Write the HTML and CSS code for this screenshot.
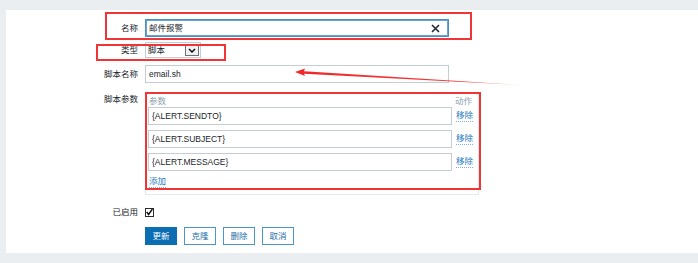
FILE: index.html
```html
<!DOCTYPE html>
<html lang="zh-CN">
<head>
  <meta charset="UTF-8">
  <title>报警媒介类型</title>
  <link rel="stylesheet" href="styles.css">
</head>
<body>

  <div class="page">
    <div class="panel">

      <div class="row row-name">
        <label class="label">名称</label>
        <div class="field">
          <div class="text-box focused wide">
            <span>邮件报警</span>
            <svg class="clear" width="9" height="9" viewBox="0 0 9 9"><path d="M1 1 L8 8 M8 1 L1 8" stroke="#1f2c33" stroke-width="1.6"/></svg>
          </div>
        </div>
      </div>

      <div class="row row-type">
        <label class="label">类型</label>
        <div class="field">
          <div class="select">
            <span>脚本</span>
            <span class="select-btn">
              <svg width="8" height="5" viewBox="0 0 8 5"><path d="M1 1 L4 4 L7 1" fill="none" stroke="#111" stroke-width="1.5"/></svg>
            </span>
          </div>
        </div>
      </div>

      <div class="row row-script">
        <label class="label">脚本名称</label>
        <div class="field">
          <div class="text-box wide">email.sh</div>
        </div>
      </div>

      <div class="row row-params">
        <label class="label label-top">脚本参数</label>
        <div class="field">
          <div class="params">
            <div class="params-head">
              <span>参数</span>
              <span>动作</span>
            </div>
            <div class="param">
              <div class="text-box param-box">{ALERT.SENDTO}</div>
              <a class="link">移除</a>
            </div>
            <div class="param">
              <div class="text-box param-box">{ALERT.SUBJECT}</div>
              <a class="link">移除</a>
            </div>
            <div class="param">
              <div class="text-box param-box">{ALERT.MESSAGE}</div>
              <a class="link">移除</a>
            </div>
            <a class="link add">添加</a>
          </div>
        </div>
      </div>

      <div class="row row-enabled">
        <label class="label">已启用</label>
        <div class="field">
          <span class="checkbox">
            <svg width="8" height="8" viewBox="0 0 8 8"><path d="M0.8 4 L3 6.8 L7.4 0.6" fill="none" stroke="#111" stroke-width="1.7"/></svg>
          </span>
        </div>
      </div>

      <div class="row row-buttons">
        <span></span>
        <div class="buttons">
          <button class="btn primary">更新</button>
          <button class="btn">克隆</button>
          <button class="btn">删除</button>
          <button class="btn">取消</button>
        </div>
      </div>

      <!-- red annotations drawn over the form -->
      <div class="mark mark-name"></div>
      <div class="mark mark-type"></div>
      <div class="mark mark-params"></div>
      <svg class="arrow" width="240" height="20" viewBox="0 0 240 20">
        <defs>
          <linearGradient id="fade" x1="0" y1="0" x2="1" y2="0">
            <stop offset="0" stop-color="#f02828"/>
            <stop offset="0.7" stop-color="#f03c3c"/>
            <stop offset="1" stop-color="#f03c3c" stop-opacity="0"/>
          </linearGradient>
        </defs>
        <polygon points="0,4 10,0.5 9,3.2 234,17.5 9,5.8 10,8" fill="url(#fade)"/>
      </svg>

    </div>
  </div>

</body>
</html>
```

FILE: styles.css
```css
body {
  margin: 0;
  background-color: #ebeef0;
  font-family: "Liberation Sans", Arial, "Noto Sans CJK SC", sans-serif;
  font-size: 8.5px;
  color: #1a252b;
}
.page {
  padding: 10px 0 10px 6px;
}
.panel {
  position: relative;
  background-color: #fff;
  height: 243px;
  padding-top: 9px;
  box-sizing: border-box;
}
.row {
  display: grid;
  grid-template-columns: 132px 1fr;
  column-gap: 7px;
  align-items: center;
}
.label {
  text-align: right;
  line-height: 12px;
}
.label-top {
  align-self: start;
}
.row-type {
  margin-top: 5px;
}
.row-script {
  margin-top: 7px;
}
.row-params {
  margin-top: 10px;
}
.row-enabled {
  margin-top: 11px;
}
.row-buttons {
  margin-top: 9px;
}
.text-box {
  box-sizing: border-box;
  height: 18px;
  border: 1px solid #c3cdd3;
  background: #fff;
  padding: 0 2px 0 3px;
  line-height: 16px;
  display: flex;
  align-items: center;
  justify-content: space-between;
  white-space: nowrap;
}
.wide {
  width: 304px;
}
.focused {
  border: 1px solid #4a8fc4;
  box-shadow: inset 0 0 0 1px #6aa4cf;
}
.clear {
  margin-right: 6px;
}
.select {
  box-sizing: border-box;
  width: 56px;
  height: 16px;
  border: 1px solid #c3cdd3;
  display: flex;
  align-items: center;
  justify-content: space-between;
  padding: 0 1px 0 2px;
  line-height: 12px;
}
.select-btn {
  box-sizing: border-box;
  width: 14px;
  height: 12px;
  border: 1px solid #6b7275;
  background: #f2f2f2;
  display: flex;
  align-items: center;
  justify-content: center;
}
.params {
  box-sizing: border-box;
  width: 334px;
  height: 102px;
  border: 1px solid #e3e8eb;
  padding: 1px 0 0 2px;
}
.params-head {
  display: flex;
  justify-content: space-between;
  color: #8aa0aa;
  line-height: 12px;
  padding: 0 6px 0 1px;
}
.param {
  display: flex;
  align-items: center;
  gap: 4px;
  margin-top: 5px;
}
.params-head + .param {
  margin-top: 0;
}
.param-box {
  width: 304px;
  flex: none;
}
.link {
  color: #1f7ac0;
  border-bottom: 1px dotted #7fb2da;
  line-height: 11px;
  white-space: nowrap;
}
.add {
  display: inline-block;
  margin-top: 5px;
  margin-left: 1px;
}
.checkbox {
  box-sizing: border-box;
  display: flex;
  align-items: center;
  justify-content: center;
  width: 9px;
  height: 9px;
  border: 1px solid #2b2b2b;
}
.buttons {
  display: flex;
  gap: 7px;
}
.btn {
  box-sizing: border-box;
  width: 32px;
  height: 18px;
  padding: 0;
  border: 1px solid #4a95cc;
  background: #fff;
  color: #1d6faa;
  font-family: inherit;
  font-size: 8.5px;
  line-height: 16px;
}
.btn.primary {
  background: #0b6db2;
  border-color: #0b6db2;
  color: #fff;
}
.mark {
  position: absolute;
  border: 2px solid #ef3535;
  box-sizing: border-box;
}
.mark-name {
  left: 99px;
  top: 2px;
  width: 367px;
  height: 28px;
}
.mark-type {
  left: 90px;
  top: 34px;
  width: 130px;
  height: 17px;
}
.mark-params {
  left: 139px;
  top: 82px;
  width: 336px;
  height: 98px;
}
.arrow {
  position: absolute;
  left: 289px;
  top: 58px;
}
```
